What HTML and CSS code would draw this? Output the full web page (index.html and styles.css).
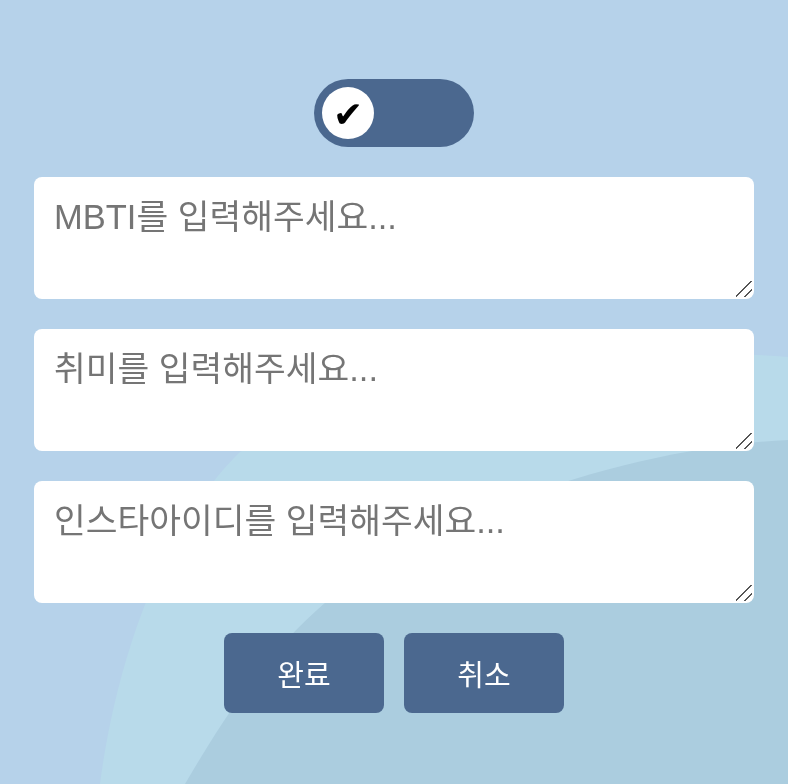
FILE: index.html
```html
<!DOCTYPE html>
<html lang="ko">
<head>
<meta charset="utf-8">
<title>입력</title>
<link rel="stylesheet" href="styles.css">
</head>
<body>
<svg class="backdrop" viewBox="0 0 788 784" preserveAspectRatio="none" aria-hidden="true">
  <path class="wave-light" d="M100 784 C112 690 150 540 240 452 C360 390 580 340 788 357 L788 784 Z"/>
  <path class="wave-dark" d="M185 784 C240 690 300 600 420 540 C540 480 680 445 788 440 L788 784 Z"/>
</svg>
<main class="form">
  <div class="toggle">
    <span class="knob">✔</span>
  </div>
  <div class="field-wrap"><textarea class="field" placeholder="MBTI를 입력해주세요..."></textarea></div>
  <div class="field-wrap"><textarea class="field" placeholder="취미를 입력해주세요..."></textarea></div>
  <div class="field-wrap"><textarea class="field" placeholder="인스타아이디를 입력해주세요..."></textarea></div>
  <div class="actions">
    <button class="btn" type="button">완료</button>
    <button class="btn" type="button">취소</button>
  </div>
</main>
</body>
</html>
```
FILE: styles.css
```css
html, body {
  margin: 0;
  height: 100%;
}
body {
  background: #b6d2ea;
  font-family: "Liberation Sans", "Noto Sans CJK KR", sans-serif;
  overflow: hidden;
}
.backdrop {
  position: fixed;
  left: 0;
  top: 0;
  width: 788px;
  height: 784px;
  z-index: -1;
}
.wave-light { fill: #b8daea; }
.wave-dark { fill: #abcddf; }

.form {
  display: flex;
  flex-direction: column;
  align-items: center;
  gap: 30px;
  padding-top: 79px;
}
.toggle {
  width: 160px;
  height: 68px;
  box-sizing: border-box;
  padding: 8px;
  border-radius: 34px;
  background: #4b688f;
  display: flex;
  align-items: center;
}
.knob {
  width: 52px;
  height: 52px;
  border-radius: 50%;
  background: #fff;
  color: #000;
  display: flex;
  align-items: center;
  justify-content: center;
  font-family: "DejaVu Sans", sans-serif;
  font-size: 36px;
  line-height: 1;
  padding-top: 3px;
  box-sizing: border-box;
}
.field-wrap {
  position: relative;
  width: 720px;
  height: 122px;
}
.field-wrap::after {
  content: "";
  position: absolute;
  right: 2px;
  bottom: 2px;
  width: 16px;
  height: 16px;
  pointer-events: none;
  background: linear-gradient(135deg,
    transparent 0 46%, #555 46% 53%,
    transparent 53% 72%, #555 72% 79%,
    transparent 79%);
}
.field {
  display: block;
  width: 100%;
  height: 100%;
  box-sizing: border-box;
  margin: 0;
  border: none;
  border-radius: 8px;
  padding: 20px;
  background: #fff;
  font-family: "Liberation Sans", "Noto Sans CJK KR", sans-serif;
  font-size: 34.5px;
  line-height: 1.2;
  color: #333;
  outline: none;
  resize: none;
}
.field::placeholder {
  color: #757575;
}
.actions {
  display: flex;
  gap: 20px;
}
.btn {
  width: 160px;
  height: 80px;
  border: none;
  border-radius: 8px;
  background: #4b688f;
  color: #fff;
  font-family: "Noto Sans CJK KR", sans-serif;
  font-size: 29px;
  padding: 0;
  cursor: pointer;
}
```
